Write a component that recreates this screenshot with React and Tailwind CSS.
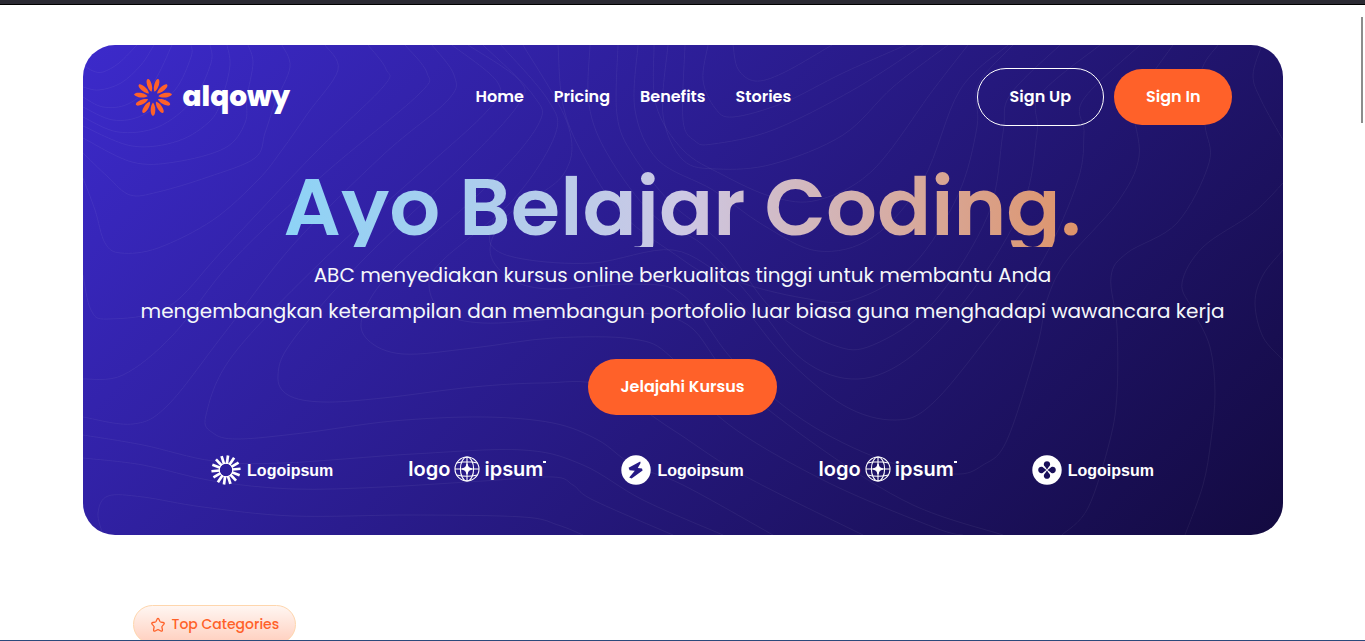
import React from "react";

const contours = [
  [[0, 20], [10, 26], [20, 27], [36, 18], [54, 0]],
  [[0, 42], [16, 45], [38, 38], [58, 20], [71, 0]],
  [[0, 52], [20, 62], [45, 59], [70, 38], [89, 0]],
  [[0, 62], [30, 75], [60, 70], [92, 45], [108, 12], [108, 0]],
  [[0, 72], [35, 87], [75, 82], [110, 55], [128, 18], [127, 0]],
  [[0, 81], [49, 101], [95, 96], [128, 75], [140, 50], [147, 20], [144, 0]],
  [[0, 93], [49, 117], [92, 117], [142, 103], [162, 78], [164, 52], [170, 18], [165, 0]],
  [[0, 108], [25, 132], [47, 150], [75, 147], [125, 132], [172, 113], [182, 88], [192, 58], [207, 22], [199, 0]],
  [[0, 133], [12, 165], [22, 198], [38, 208], [75, 203], [130, 175], [175, 135], [199, 105], [225, 68], [255, 25], [242, 0]],
  [[0, 230], [8, 265], [25, 274], [85, 262], [140, 205], [230, 110], [300, 42], [303, 24], [285, 0]],
  [[0, 334], [40, 330], [90, 290], [150, 215], [240, 130], [335, 50], [344, 28], [322, 0]],
  [[0, 372], [50, 379], [85, 360], [140, 290], [210, 200], [300, 110], [365, 55], [371, 30], [349, 0]],
  [[369, 0], [415, 38], [405, 65], [340, 125], [240, 215], [150, 310], [123, 370], [130, 388], [155, 394], [220, 388], [310, 376], [400, 372], [470, 378], [515, 395], [550, 420], [600, 440], [690, 490]],
  [[385, 0], [436, 35], [435, 60], [380, 120], [280, 215], [210, 295], [195, 330], [205, 350], [240, 357], [300, 353], [390, 342], [460, 338], [520, 341], [590, 385], [660, 430], [780, 490]],
  [[400, 0], [450, 50], [455, 80], [400, 145], [310, 225], [280, 270], [285, 295], [320, 309], [390, 303], [470, 293], [550, 294], [588, 312], [640, 375], [740, 435], [850, 482], [880, 490]],
  [[418, 0], [465, 55], [472, 90], [430, 155], [360, 215], [346, 240], [360, 268], [400, 278], [470, 274], [550, 268], [605, 280], [650, 335], [740, 405], [830, 460], [920, 490]],
  [[440, 0], [485, 80], [480, 130], [425, 170], [407, 205], [425, 232], [465, 244], [550, 239], [600, 250], [650, 315], [720, 375], [800, 415], [870, 429], [900, 420], [924, 395], [954, 302], [964, 255], [984, 215], [1034, 158], [1056, 112], [1050, 60], [1065, 35], [1090, 0]],
  [[475, 0], [480, 60], [500, 110], [540, 170], [600, 215], [650, 250], [700, 310], [760, 360], [812, 375], [850, 358], [910, 285], [960, 215], [995, 135], [1001, 88], [1000, 55], [1057, 0]],
  [[507, 0], [506, 60], [525, 110], [570, 170], [620, 200], [670, 255], [720, 315], [775, 334], [830, 310], [890, 245], [940, 160], [954, 88], [957, 50], [1017, 0]],
  [[535, 0], [534, 70], [550, 110], [590, 160], [640, 200], [690, 265], [750, 300], [790, 300], [850, 258], [905, 170], [920, 88], [927, 50], [977, 0]],
  [[412, 170], [408, 200], [440, 214], [510, 218], [590, 205], [650, 235], [720, 253], [770, 255], [830, 220], [875, 150], [894, 82], [895, 40], [930, 0]],
  [[555, 0], [552, 65], [575, 115], [630, 145], [680, 180], [735, 206], [790, 192], [840, 135], [877, 45], [925, 0]],
  [[571, 0], [573, 60], [600, 105], [640, 130], [690, 152], [735, 155], [790, 125], [850, 45], [885, 0]],
  [[585, 0], [580, 70], [600, 115], [635, 124], [690, 119], [760, 90], [810, 42], [865, 0]],
  [[602, 0], [600, 75], [612, 96], [630, 99], [690, 85], [770, 45], [840, 0]],
  [[625, 0], [620, 35], [632, 63], [650, 72], [700, 58], [760, 28], [823, 0]],
  [[650, 0], [655, 24], [672, 36], [700, 28], [749, 0]],
  [[1135, 0], [1118, 28], [1122, 80], [1126, 118], [1094, 178], [1044, 208], [1028, 232], [1034, 282], [1034, 348], [1027, 395], [1005, 463], [979, 490]],
  [[1179, 0], [1170, 30], [1178, 55], [1200, 95]],
  [[1200, 138], [1170, 168], [1120, 202], [1099, 238], [1110, 265], [1127, 302], [1132, 348], [1128, 395], [1120, 440], [1102, 490]],
  [[1200, 205], [1180, 230], [1172, 258], [1180, 292], [1200, 315]],
  [[0, 390], [60, 400], [130, 416], [200, 418], [330, 409], [440, 405], [500, 420], [560, 455], [640, 490]],
  [[0, 413], [60, 420], [130, 436], [210, 444], [300, 442], [400, 436], [470, 432], [490, 440], [510, 455], [590, 490]],
  [[20, 490], [15, 468], [25, 451], [60, 452], [120, 462], [210, 471], [330, 470], [440, 472], [475, 480], [500, 490]],
];

function smooth(points) {
  let d = `M${points[0][0]} ${points[0][1]}`;
  for (let i = 0; i < points.length - 1; i++) {
    const p0 = points[i - 1] || points[i];
    const p1 = points[i];
    const p2 = points[i + 1];
    const p3 = points[i + 2] || p2;
    d += `C${p1[0] + (p2[0] - p0[0]) / 6} ${p1[1] + (p2[1] - p0[1]) / 6} ${p2[0] - (p3[0] - p1[0]) / 6} ${p2[1] - (p3[1] - p1[1]) / 6} ${p2[0]} ${p2[1]}`;
  }
  return d;
}

function Contours() {
  return (
    <svg
      className="absolute inset-0 h-full w-full"
      viewBox="0 0 1200 490"
      preserveAspectRatio="xMidYMid slice"
      fill="none"
      stroke="#fff"
      strokeOpacity="0.055"
      aria-hidden="true"
    >
      {contours.map((points, i) => (
        <path key={i} d={smooth(points)} />
      ))}
    </svg>
  );
}

function FlowerMark() {
  return (
    <svg className="size-10" viewBox="-20 -20 40 40" fill="#ff6129" aria-hidden="true">
      {Array.from({ length: 11 }, (_, i) => (
        <path
          key={i}
          transform={`rotate(${180 + (i * 360) / 11})`}
          d="M0 -5.4C1.5 -7 2.3 -10 2.3 -13C2.3 -16.5 1.3 -18.8 0 -18.8C-1.3 -18.8 -2.3 -16.5 -2.3 -13C-2.3 -10 -1.5 -7 0 -5.4Z"
        />
      ))}
    </svg>
  );
}

function SunMark() {
  return (
    <svg className="size-[30px]" viewBox="-15 -15 30 30" stroke="#fff" aria-hidden="true">
      {Array.from({ length: 14 }, (_, i) => (
        <path
          key={i}
          transform={`rotate(${8 + (i * 360) / 14})`}
          d="M0 -6.2V-14.6"
          strokeWidth="2.7"
        />
      ))}
      <circle r="6.8" fill="none" strokeWidth="1" />
    </svg>
  );
}

function GlobeMark() {
  return (
    <svg className="size-[26px]" viewBox="-13 -13 26 26" fill="none" stroke="#fff" strokeWidth="1.1" aria-hidden="true">
      <circle r="12" />
      <ellipse rx="6.6" ry="12" />
      <path d="M0 -12V12M-12 0H12M-10.4 -6Q0 -8.6 10.4 -6M-10.4 6Q0 8.6 10.4 6" />
      <path d="M0 -5C.8 -1.6 1.6 -.8 5 0C1.6 .8 .8 1.6 0 5C-.8 1.6 -1.6 .8 -5 0C-1.6 -.8 -.8 -1.6 0 -5Z" fill="#fff" />
    </svg>
  );
}

function BoltMark() {
  return (
    <svg className="size-[30px]" viewBox="0 0 30 30" aria-hidden="true">
      <circle cx="15" cy="15" r="14.7" fill="#fff" />
      <path
        d="M19.2 6.4L7.6 12.8L8.6 15.2L13.8 15.8L8.2 22.6L10.6 23.4L21.6 15.6L21 13.6L16.8 13L19.6 8Z"
        fill="#261a86"
      />
    </svg>
  );
}

function CloverMark() {
  return (
    <svg className="size-[30px]" viewBox="-15 -15 30 30" aria-hidden="true">
      <circle r="14.7" fill="#fff" />
      {[0, 90, 180, 270].map((a) => (
        <path
          key={a}
          transform={`rotate(${a})`}
          d="M0 -.6L-1.9 -3.2C-4.2 -5 -3.2 -8.8 0 -8.8C3.2 -8.8 4.2 -5 1.9 -3.2Z"
          fill="#190f59"
        />
      ))}
    </svg>
  );
}

function LogoIpsum({ mark }) {
  return (
    <li className="flex items-center gap-[6px]">
      {mark}
      <span className="pt-[2px] font-['Liberation_Sans',Arial,sans-serif] text-base font-bold leading-5">Logoipsum</span>
    </li>
  );
}

function LogoGlobe() {
  return (
    <li className="flex items-center gap-1 pb-[3px] font-[Inter,sans-serif] text-xl font-semibold leading-6">
      <span>logo</span>
      <GlobeMark />
      <span className="flex">
        ipsum
        <span className="mt-1 h-[2px] w-[3px] bg-white" />
      </span>
    </li>
  );
}

const links = ["Home", "Pricing", "Benefits", "Stories"];

export default function App() {
  return (
    <div className="flex h-screen flex-col overflow-hidden border-b border-[#2b4a7c] bg-white font-[Poppins,Inter,sans-serif]">
      <div className="h-[5px] shrink-0 border-b border-black bg-[#2b2a33]" />
      <main className="mx-auto mt-10 w-full max-w-[1200px] shrink-0">
        <section className="relative overflow-hidden rounded-[32px] bg-[linear-gradient(135deg,#3c2acb,#130a40)] pb-[50px] pt-[23px] text-white">
          <Contours />
          <div className="relative flex flex-col items-center">
            <header className="flex w-full items-center justify-between px-[50px]">
              <a href="#home" className="flex items-center gap-[10px]">
                <FlowerMark />
                <span className="text-[28px] font-extrabold leading-10">alqowy</span>
              </a>
              <nav>
                <ul className="flex gap-[30px] font-semibold">
                  {links.map((l) => (
                    <li key={l}>
                      <a href={`#${l.toLowerCase()}`}>{l}</a>
                    </li>
                  ))}
                </ul>
              </nav>
              <div className="flex items-center gap-[10px]">
                <button type="button" className="rounded-[30px] border border-white px-8 py-4 font-semibold">
                  Sign Up
                </button>
                <button type="button" className="rounded-[30px] bg-[#ff6129] px-8 py-4 font-semibold">
                  Sign In
                </button>
              </div>
            </header>
            <h1 className="mt-[41px] bg-[linear-gradient(90deg,#8dd3f6,#cdc8e4_50%,#de9369)] bg-clip-text text-[80px] font-semibold leading-[80px] text-transparent">
              Ayo Belajar Coding.
            </h1>
            <p className="mt-[10px] text-center text-xl leading-9 text-[#f5f8fa]">
              ABC menyediakan kursus online berkualitas tinggi untuk membantu Anda
              <br />
              mengembangkan keterampilan dan membangun portofolio luar biasa guna menghadapi wawancara kerja
            </p>
            <button type="button" className="mt-[30px] rounded-[30px] bg-[#ff6129] px-8 py-4 font-semibold">
              Jelajahi Kursus
            </button>
            <ul className="mt-10 flex items-center justify-center gap-[75px]">
              <LogoIpsum mark={<SunMark />} />
              <LogoGlobe />
              <LogoIpsum mark={<BoltMark />} />
              <LogoGlobe />
              <LogoIpsum mark={<CloverMark />} />
            </ul>
          </div>
        </section>
        <section className="px-[50px] pt-[70px]">
          <h2 className="flex w-fit items-center gap-[6px] rounded-full border border-[#fed6ad] bg-[linear-gradient(#fff6f2,#ffcfbe)] px-4 py-2 text-sm font-medium leading-[21px] text-[#ff6129]">
            <svg className="size-4" viewBox="0 0 16 16" fill="none" stroke="currentColor" strokeWidth="1.3" strokeLinejoin="round" aria-hidden="true">
              <path d="M7.1 2.2Q8 .7 8.9 2.2L10 4.5Q10.3 5 10.9 5.1L13.2 5.5Q15 6 13.8 7.4L12.2 9.1Q11.8 9.5 11.9 10.1L12.4 12.6Q12.6 14.7 10.8 14L8.6 12.8Q8 12.5 7.4 12.8L5.2 14Q3.4 14.7 3.6 12.6L4.1 10.1Q4.2 9.5 3.8 9.1L2.2 7.4Q1 6 2.8 5.5L5.1 5.1Q5.7 5 6 4.5Z" />
            </svg>
            Top Categories
          </h2>
        </section>
      </main>
      <div className="fixed right-[2px] top-[17px] h-[106px] w-[2px] bg-[#8c8c8c]" />
    </div>
  );
}
